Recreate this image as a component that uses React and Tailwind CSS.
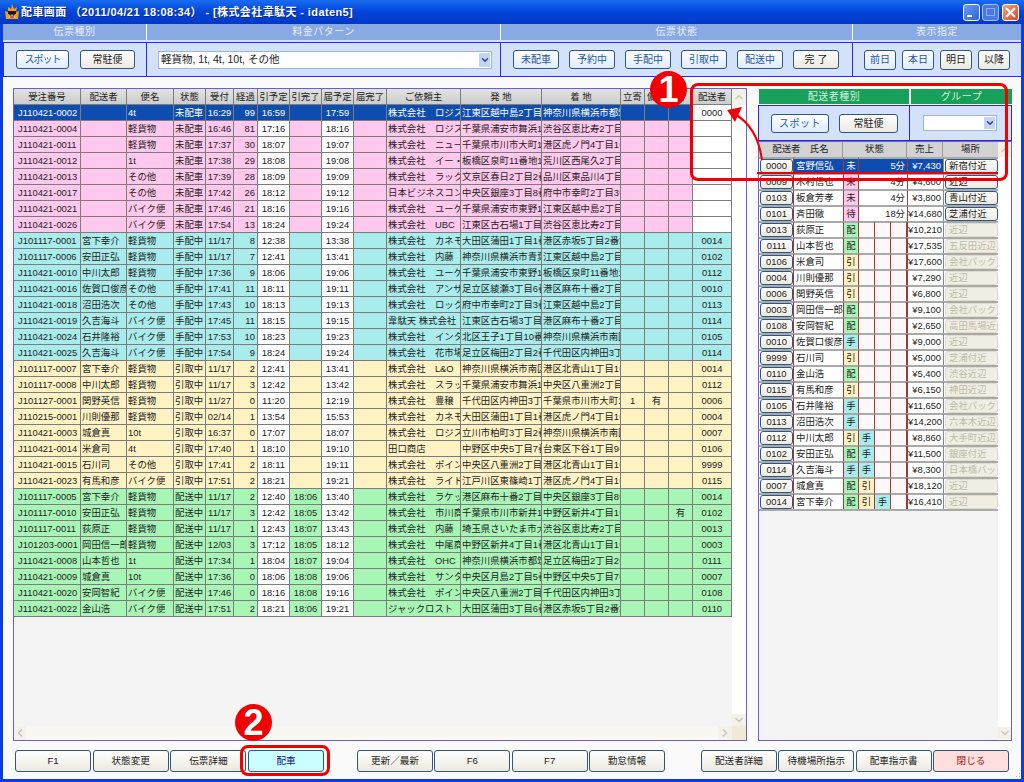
import { ChevronDown, ChevronUp, ChevronLeft, ChevronRight } from 'lucide-react'

const TABLE_COLS = 'grid grid-cols-[67px_46px_47px_32px_28px_24px_32px_32px_32px_33px_74px_81px_79px_24px_24px_24px_39px]'
const HEADERS = ['受注番号', '配送者', '便名', '状態', '受付', '経過', '引予定', '引完了', '届予定', '届完了', 'ご依頼主', '発 地', '着 地', '立寄', '備考', '告', '配送者']

const COLORS = {
  pink: 'bg-[#ffc8ec]',
  teal: 'bg-[#a8ecec]',
  yellow: 'bg-[#fff3c4]',
  green: 'bg-[#a8f6b6]',
}

// no, driver, bin, status, recv, elapsed, pickup plan, pickup done, drop plan, drop done, client, from, to, stop, note, flag, code
const ORDERS = [
  ['pink', 'J110421-0002', '', '4t', '未配車', '16:29', '99', '16:59', '', '17:59', '', '株式会社　ロジスティクス', '江東区越中島2丁目1', '神奈川県横浜市都筑区', '', '', '', '0000'],
  ['pink', 'J110421-0004', '', '軽貨物', '未配車', '16:46', '81', '17:16', '', '18:16', '', '株式会社　ロジスティクス', '千葉県浦安市舞浜1', '渋谷区恵比寿2丁目1', '', '', '', ''],
  ['pink', 'J110421-0011', '', '軽貨物', '未配車', '17:37', '30', '18:07', '', '19:07', '', '株式会社　ニューワン', '千葉県市川市大町1', '港区虎ノ門4丁目1番', '', '', '', ''],
  ['pink', 'J110421-0012', '', '1t', '未配車', '17:38', '29', '18:08', '', '19:08', '', '株式会社　イー・フラット', '板橋区泉町11番地1', '荒川区西尾久2丁目1', '', '', '', ''],
  ['pink', 'J110421-0013', '', 'その他', '未配車', '17:39', '28', '18:09', '', '19:09', '', '株式会社　ラックス', '文京区春日2丁目2番', '品川区東品川4丁目1', '', '', '', ''],
  ['pink', 'J110421-0017', '', 'その他', '未配車', '17:42', '26', '18:12', '', '19:12', '', '日本ビジネスコンサル', '中央区銀座3丁目8番', '府中市幸町2丁目3番', '', '', '', ''],
  ['pink', 'J110421-0021', '', 'バイク便', '未配車', '17:46', '21', '18:16', '', '19:16', '', '株式会社　ユーケー', '千葉県浦安市東野1', '江東区越中島2丁目1', '', '', '', ''],
  ['pink', 'J110421-0026', '', 'バイク便', '未配車', '17:54', '13', '18:24', '', '19:24', '', '株式会社　UBC', '江東区古石場1丁目1', '渋谷区恵比寿2丁目1', '', '', '', ''],
  ['teal', 'J101117-0001', '宮下幸介', '軽貨物', '手配中', '11/17', '8', '12:38', '', '13:38', '', '株式会社　カネモト', '大田区蒲田1丁目1番', '港区赤坂5丁目2番地', '', '', '', '0014'],
  ['teal', 'J101117-0006', '安田正弘', '軽貨物', '手配中', '11/17', '7', '12:41', '', '13:41', '', '株式会社　内藤', '神奈川県横浜市青葉', '江東区越中島2丁目1', '', '', '', '0102'],
  ['teal', 'J110421-0010', '中川太郎', '軽貨物', '手配中', '17:36', '9', '18:06', '', '19:06', '', '株式会社　ユーケー', '千葉県浦安市東野1', '板橋区泉町11番地1', '', '', '', '0112'],
  ['teal', 'J110421-0016', '佐賀口俊彦', 'その他', '手配中', '17:41', '11', '18:11', '', '19:11', '', '株式会社　アンザイ', '足立区綾瀬3丁目6番', '港区麻布十番2丁目1', '', '', '', '0010'],
  ['teal', 'J110421-0018', '沼田浩次', 'その他', '手配中', '17:43', '10', '18:13', '', '19:13', '', '株式会社　ロックス', '府中市幸町2丁目3番', '江東区越中島2丁目1', '', '', '', '0113'],
  ['teal', 'J110421-0019', '久吉海斗', 'バイク便', '手配中', '17:45', '11', '18:15', '', '19:15', '', '韋駄天 株式会社', '江東区古石場3丁目1', '港区麻布十番2丁目1', '', '', '', '0114'],
  ['teal', 'J110421-0024', '石井隆裕', 'バイク便', '手配中', '17:53', '10', '18:23', '', '19:23', '', '株式会社　インターナ', '北区王子1丁目10番', '神奈川県横浜市南区', '', '', '', '0105'],
  ['teal', 'J110421-0025', '久吉海斗', 'バイク便', '手配中', '17:54', '9', '18:24', '', '19:24', '', '株式会社　花市場', '足立区梅田2丁目2番', '千代田区内神田3丁目', '', '', '', '0114'],
  ['yellow', 'J101117-0007', '宮下幸介', '軽貨物', '引取中', '11/17', '2', '12:41', '', '13:41', '', '株式会社　L&O', '神奈川県横浜市南区', '港区北青山1丁目1番', '', '', '', '0014'],
  ['yellow', 'J101117-0008', '中川太郎', '軽貨物', '引取中', '11/17', '3', '12:42', '', '13:42', '', '株式会社　スラッシュ', '千葉県浦安市舞浜1', '中央区八重洲2丁目1', '', '', '', '0112'],
  ['yellow', 'J101127-0001', '関野英信', '軽貨物', '引取中', '11/27', '0', '11:20', '', '12:19', '', '株式会社　豊穣', '千代田区内神田3丁目', '千葉県市川市大町1', '1', '有', '', '0006'],
  ['yellow', 'J110215-0001', '川則優那', '軽貨物', '引取中', '02/14', '1', '13:54', '', '15:53', '', '株式会社　カネモト', '大田区蒲田1丁目1番', '港区虎ノ門4丁目1番', '', '', '', '0004'],
  ['yellow', 'J110421-0003', '城倉真', '10t', '引取中', '16:37', '0', '17:07', '', '18:07', '', '株式会社　ロジスティクス', '立川市柏町3丁目2番', '神奈川県横浜市南区', '', '', '', '0007'],
  ['yellow', 'J110421-0014', '米倉司', '4t', '引取中', '17:40', '1', '18:10', '', '19:10', '', '田口商店', '中野区中央5丁目7番', '台東区下谷1丁目9番', '', '', '', '0106'],
  ['yellow', 'J110421-0015', '石川司', 'その他', '引取中', '17:41', '2', '18:11', '', '19:11', '', '株式会社　ポイント', '中央区八重洲2丁目1', '港区北青山1丁目1番', '', '', '', '9999'],
  ['yellow', 'J110421-0023', '有馬和彦', 'バイク便', '引取中', '17:51', '2', '18:21', '', '19:21', '', '株式会社　ライドオン', '江戸川区東篠崎1丁目', '港区虎ノ門4丁目1番', '', '', '', '0115'],
  ['green', 'J101117-0005', '宮下幸介', '軽貨物', '配送中', '11/17', '2', '12:40', '18:06', '13:40', '', '株式会社　ラケット', '港区麻布十番2丁目1', '中央区銀座3丁目8番', '', '', '', '0014'],
  ['green', 'J101117-0010', '安田正弘', '軽貨物', '配送中', '11/17', '3', '12:42', '18:05', '13:42', '', '株式会社　市川商事', '千葉県市川市新井1', '中野区新井4丁目1番', '', '', '有', '0102'],
  ['green', 'J101117-0011', '荻原正', '軽貨物', '配送中', '11/17', '1', '12:43', '18:07', '13:43', '', '株式会社　内藤', '埼玉県さいたま市大宮', '渋谷区恵比寿2丁目1', '', '', '', '0013'],
  ['green', 'J101203-0001', '岡田信一郎', '軽貨物', '配送中', '12/03', '3', '17:12', '18:05', '18:12', '', '株式会社　中尾商事', '中野区新井4丁目1番', '港区北青山1丁目1番', '', '', '', '0003'],
  ['green', 'J110421-0008', '山本哲也', '1t', '配送中', '17:34', '1', '18:04', '18:07', '19:04', '', '株式会社　OHC', '神奈川県横浜市都筑', '足立区梅田2丁目2番', '', '', '', '0111'],
  ['green', 'J110421-0009', '城倉真', '10t', '配送中', '17:36', '0', '18:06', '18:08', '19:06', '', '株式会社　サンタス', '中央区月島2丁目5番', '中野区中央5丁目7番', '', '', '', '0007'],
  ['green', 'J110421-0020', '安岡智紀', 'バイク便', '配送中', '17:46', '0', '18:16', '18:08', '19:16', '', '株式会社　ポイント', '中央区八重洲2丁目1', '千代田区内神田3丁目', '', '', '', '0108'],
  ['green', 'J110421-0022', '金山浩', 'バイク便', '配送中', '17:51', '2', '18:21', '18:06', '19:21', '', 'ジャックロスト', '大田区蒲田3丁目6番', '港区赤坂5丁目2番地', '', '', '', '0110'],
]

const DRIVER_COLS = 'grid grid-cols-[35px_49px_16px_16px_16px_16px_36px_55px]'
const STATE_BG = {
  未: 'bg-[#ffc8ec]',
  待: 'bg-[#ffc8ec]',
  配: 'bg-[#a8f6b6]',
  引: 'bg-[#fff3c4]',
  手: 'bg-[#a8ecec]',
}

// code, name, states, waiting minutes, sales, place, active place button
const DRIVERS = [
  ['0000', '宮野信弘', ['未'], '5分', '¥7,430', '新宿付近', true],
  ['0009', '木村信也', ['未'], '4分', '¥4,600', '近辺', true],
  ['0103', '板倉芳孝', ['未'], '4分', '¥3,800', '青山付近', true],
  ['0101', '斉田徹', ['待'], '18分', '¥14,680', '芝浦付近', true],
  ['0013', '荻原正', ['配'], null, '¥10,210', '近辺'],
  ['0111', '山本哲也', ['配'], null, '¥17,535', '五反田近辺'],
  ['0106', '米倉司', ['引'], null, '¥17,600', '会社バック'],
  ['0004', '川則優那', ['引'], null, '¥7,290', '近辺'],
  ['0006', '関野英信', ['引'], null, '¥6,800', '近辺'],
  ['0003', '岡田信一郎', ['配'], null, '¥9,100', '会社バック'],
  ['0108', '安岡智紀', ['配'], null, '¥2,650', '高田馬場近辺'],
  ['0010', '佐賀口俊彦', ['手'], null, '¥9,000', '近辺'],
  ['9999', '石川司', ['引'], null, '¥5,000', '芝浦付近'],
  ['0110', '金山浩', ['配'], null, '¥5,400', '渋谷近辺'],
  ['0115', '有馬和彦', ['引'], null, '¥6,150', '神田近辺'],
  ['0105', '石井隆裕', ['手'], null, '¥11,650', '会社バック'],
  ['0113', '沼田浩次', ['手'], null, '¥14,200', '六本木近辺'],
  ['0112', '中川太郎', ['引', '手'], null, '¥8,860', '大手町近辺'],
  ['0102', '安田正弘', ['配', '手'], null, '¥11,500', '銀座付近'],
  ['0114', '久吉海斗', ['手', '手'], null, '¥8,300', '日本橋バック'],
  ['0007', '城倉真', ['配', '引'], null, '¥18,120', '近辺'],
  ['0014', '宮下幸介', ['配', '引', '手'], null, '¥16,410', '近辺'],
]

/* ---------- XP style button ---------- */
function Btn({ children, kind = 'plain', className = '' }) {
  const look = {
    plain: 'bg-gradient-to-b from-white to-[#ece9df] text-[#222]',
    on: 'bg-gradient-to-b from-white to-[#dfecfc] text-[#2458a8]',
    hot: 'bg-[#ccffff] text-[#10108a]',
    close: 'bg-[#ffdede] text-[#a01010]',
  }[kind]
  return (
    <div className={`flex items-center justify-center rounded-[3px] border border-[#2d5680] whitespace-nowrap shrink-0 ${look} ${className}`}>
      {children}
    </div>
  )
}

function Select({ value, className = '' }) {
  return (
    <div className={`flex items-center bg-white border border-[#9db4d2] ${className}`}>
      <span className="flex-1 pl-[2px] text-[10.5px] text-[#222] whitespace-nowrap">{value}</span>
      <span className="w-[13px] h-full flex items-center justify-center bg-[#c3d5f5] border border-white">
        <ChevronDown className="w-[10px] h-[10px] text-[#2b4a86]" strokeWidth={3.5} />
      </span>
    </div>
  )
}

function ScrollArrow({ icon: Icon, className = '' }) {
  return (
    <div className={`flex items-center justify-center bg-[#f3f1e8] ${className}`}>
      <Icon className="w-[12px] h-[12px] text-[#c9c7bb]" strokeWidth={3} />
    </div>
  )
}

function OrderCell({ value, index, tint, selected }) {
  const white = !selected && (index === 6 || index === 8 || (index === 16 && tint === 'pink'))
  const center = index === 4 || (index >= 6 && index <= 9) || index >= 13
  const align = index === 5 ? 'text-right pr-[2px]' : center ? 'text-center' : index === 0 ? 'pl-[4px]' : 'pl-[1px]'
  let bg = selected ? 'bg-[#0f4cb0] text-white' : `${COLORS[tint]} text-[#222]`
  if (white || (selected && index === 16)) bg = 'bg-white text-[#222]'
  return (
    <div className={`h-4 leading-[15px] border-r border-b border-[#7c7c7c] overflow-hidden whitespace-nowrap ${align} ${bg}`}>
      {value}
    </div>
  )
}

function OrderTable() {
  return (
    <div className="w-[734px] h-[653px] border border-[#6a5fd0] bg-[#f4f4f4] flex flex-col">
      <div className="flex-1 flex min-h-0">
        <div className="w-[718px]">
          <div className={TABLE_COLS}>
            {HEADERS.map((h, i) => (
              <div key={i} className="h-4 leading-[15px] text-center text-[#222] bg-gradient-to-b from-[#e2e2e2] to-[#cdcdcd] border-r border-b border-[#7c7c7c] overflow-hidden whitespace-nowrap">
                {h}
              </div>
            ))}
            {ORDERS.map(([tint, ...cells], r) =>
              cells.map((v, i) => (
                <OrderCell key={`${r}-${i}`} value={v} index={i} tint={tint} selected={r === 0} />
              ))
            )}
          </div>
        </div>
        <div className="w-[14px] bg-white flex flex-col justify-between">
          <ScrollArrow icon={ChevronUp} className="h-4" />
          <ScrollArrow icon={ChevronDown} className="h-[12px]" />
        </div>
      </div>
      <div className="h-[14px] flex bg-[#f8f7f2]">
        <ScrollArrow icon={ChevronLeft} className="w-[12px]" />
        <div className="flex-1" />
        <ScrollArrow icon={ChevronRight} className="w-[14px]" />
        <div className="w-[14px] bg-[#efe9d6]" />
      </div>
    </div>
  )
}

function DriverRow({ row, selected }) {
  const [code, name, states, wait, sales, place, active] = row
  const line = 'border-t-2 border-t-[#a9a9a9]'
  const body = selected ? 'bg-[#0f4cb0] text-white' : 'bg-white text-[#222]'
  return (
    <div className={`${DRIVER_COLS} h-4`}>
      <div className={`${line} border-r border-r-[#a03a3a] flex pl-[1px] bg-white`}>
        <Btn className="w-[33px] h-[14px]">{code}</Btn>
      </div>
      <div className={`${line} pl-[2px] leading-[13px] overflow-hidden whitespace-nowrap ${body}`}>{name}</div>
      <div className={`${line} border-l border-r border-l-[#a03a3a] border-r-[#a03a3a] text-center leading-[13px] ${selected ? body : STATE_BG[states[0]]}`}>
        {states[0]}
      </div>
      {wait ? (
        <div className={`col-span-3 ${line} text-right pr-[2px] leading-[13px] ${body}`}>{wait}</div>
      ) : (
        [1, 2, 3].map(i => (
          <div key={i} className={`${line} border-r border-r-[#a03a3a] text-center leading-[13px] text-[#222] ${STATE_BG[states[i]] || 'bg-[#fff8f8]'}`}>
            {states[i]}
          </div>
        ))
      )}
      <div className={`${line} border-l border-l-[#a03a3a] text-right pr-[2px] leading-[13px] whitespace-nowrap overflow-hidden ${body}`}>{sales}</div>
      <div className={`${line} border-l border-l-[#8a8a8a] flex pl-[1px] bg-white`}>
        {active ? (
          <Btn className="w-[53px] h-[14px] justify-start pl-[3px]">{place}</Btn>
        ) : (
          <div className="w-[53px] h-[14px] rounded-[3px] bg-[#f0eee3] border border-[#e0dccb] text-[#bdbaa8] leading-[12px] pl-[3px] overflow-hidden whitespace-nowrap">
            {place}
          </div>
        )}
      </div>
    </div>
  )
}

function DriverPanel() {
  return (
    <div className="w-[254px] mt-[1px] flex flex-col text-[#222]">
      <div className="ml-[1px] flex gap-[2px] h-[15px] text-[10px] text-[#d6f2df] text-center leading-[15px] tracking-[0.5px]">
        <div className="w-[150px] bg-[#17a05a]">配送者種別</div>
        <div className="w-[101px] bg-[#17a05a]">グループ</div>
      </div>
      <div className="h-[36px] mt-[1px] flex bg-[#d3e2f8] border border-[#2a2ae0]">
        <div className="w-[151px] flex items-center gap-[10px] pl-[12px] border-r border-[#2a2ae0]">
          <Btn kind="on" className="w-[58px] h-[19px] text-[10px] tracking-[0.5px]">スポット</Btn>
          <Btn className="w-[59px] h-[19px] text-[10px]">常駐便</Btn>
        </div>
        <div className="flex-1 flex items-center pl-[13px]">
          <Select value="" className="w-[74px] h-[16px]" />
        </div>
      </div>
      <div className="h-[600px] border border-[#6a5fd0] bg-[#f4f4f4] flex">
        <div className="w-[239px]">
          <div className={`${DRIVER_COLS} h-[15px] leading-[14px] text-center`}>
            <div className="col-span-2 bg-[#d2d2d2] border-r border-[#9a9a9a]">配送者　氏名</div>
            <div className="col-span-4 bg-[#d2d2d2] border-r border-[#9a9a9a]">状態</div>
            <div className="bg-[#d2d2d2] border-r border-[#9a9a9a]">売上</div>
            <div className="bg-[#d2d2d2]">場所</div>
          </div>
          {DRIVERS.map((d, i) => (
            <DriverRow key={d[0]} row={d} selected={i === 0} />
          ))}
          <div className="h-[2px] bg-[#a9a9a9]" />
        </div>
        <div className="w-[13px] bg-white flex flex-col justify-between">
          <ScrollArrow icon={ChevronUp} className="h-[15px]" />
          <ScrollArrow icon={ChevronDown} className="h-[12px] mb-[1px]" />
        </div>
      </div>
    </div>
  )
}

function WindowButtons() {
  return (
    <div className="flex gap-[2px]">
      <div className="w-[17px] h-[17px] rounded-[3px] border border-white bg-gradient-to-br from-[#6d9bf2] to-[#2f5fd8] flex items-end pl-[3px] pb-[3px]">
        <div className="w-[5px] h-[2px] bg-white" />
      </div>
      <div className="w-[17px] h-[17px] rounded-[3px] border border-[#a8bff0] bg-[#4a78e4] flex items-center justify-center">
        <div className="w-[9px] h-[8px] border border-[#8fb0ee]" />
      </div>
      <div className="ml-[1px] w-[17px] h-[17px] rounded-[3px] border border-white bg-gradient-to-br from-[#f0a080] to-[#d8401c] flex items-center justify-center">
        <svg width="11" height="11" viewBox="0 0 13 13">
          <path d="M2 2 L11 11 M11 2 L2 11" stroke="white" strokeWidth="2.6" strokeLinecap="round" />
        </svg>
      </div>
    </div>
  )
}

function AppIcon() {
  return (
    <svg width="14" height="16" viewBox="0 0 14 16" className="shrink-0">
      <path d="M1 15 L0 7 L3 8 L3 3 L6 5 L7 0 L9 5 L12 3 L11 8 L14 7 L13 15 Z" fill="#f59a14" />
      <path d="M4 9 H10 V14 H4 Z" fill="#ffe08a" />
      <path d="M3 7 H11 V10 H3 Z" fill="#1a1a1a" />
      <circle cx="5.5" cy="10.5" r="1.2" fill="#1a1a1a" />
      <circle cx="8.5" cy="10.5" r="1.2" fill="#1a1a1a" />
      <path d="M5 13 H9" stroke="#c81e1e" strokeWidth="1.4" />
    </svg>
  )
}

function Annotations() {
  return (
    <>
      <div className="absolute left-[690px] top-[83px] w-[318px] h-[98px] rounded-[8px] border-[3px] border-[#f00000]" />
      <div className="absolute left-[240px] top-[745px] w-[90px] h-[31px] rounded-[8px] border-[3px] border-[#f00000]" />
      <div className="absolute left-[757px] top-[172px] w-[241px] h-[2px] bg-[#f00000]" />
      <svg className="absolute left-0 top-0 pointer-events-none" width="1024" height="782" viewBox="0 0 1024 782">
        <path d="M762 160 C759 138 750 122 733 113" fill="none" stroke="#f00000" strokeWidth="2" />
        <path d="M727 110 L742 107 L735 122 Z" fill="#f00000" />
        <path d="M1019 773 h1 v1 h-1 z M1016 776 h1 v1 h-1 z M1019 776 h1 v1 h-1 z" fill="#b8b4a4" />
      </svg>
      <div className="absolute left-[650px] top-[71px] w-[37px] h-[37px] rounded-full bg-[#f00000] text-white flex items-center justify-center text-[36px] font-bold leading-none">1</div>
      <div className="absolute left-[235px] top-[704px] w-[37px] h-[37px] rounded-full bg-[#f00000] text-white flex items-center justify-center text-[36px] font-bold leading-none">2</div>
    </>
  )
}

export default function App() {
  return (
    <div className="relative w-[1024px] h-[782px] overflow-hidden bg-[#0a3ee0] font-['Liberation_Sans','Noto_Sans_CJK_JP',sans-serif] text-[9.4px] text-[#222]">
      {/* title bar */}
      <div className="h-6 flex items-center pl-[5px] pr-[5px] bg-gradient-to-b from-[#1a6cf0] via-[#0344d8] to-[#0238c8] text-white text-[11px] font-bold">
        <AppIcon />
        <span className="ml-[2px] flex-1 whitespace-nowrap tracking-[0.4px] [text-shadow:1px_1px_0_#0a2a80]">
          配車画面 （2011/04/21 18:08:34） - [株式会社韋駄天 - idaten5]
        </span>
        <WindowButtons />
      </div>

      <div className="mx-[3px] h-[755px] bg-[#fafafa] flex flex-col">
        {/* label strip */}
        <div className="h-4 flex text-[10px] text-center leading-[16px] text-[#e8f0ff] bg-[#89a9e2] tracking-[0.5px]">
          <div className="w-[144px] border-r border-white">伝票種別</div>
          <div className="w-[354px] border-r border-white">料金パターン</div>
          <div className="w-[352px] border-r border-white">伝票状態</div>
          <div className="flex-1">表示指定</div>
        </div>
        <div className="h-[2px] bg-[#d3e2f8]" />

        {/* controls strip */}
        <div className="h-[35px] flex bg-[#d3e2f8] border-y border-[#2a2ae0] text-[10px]">
          <div className="w-[144px] flex items-center gap-[11px] pl-[12px] border-x border-[#2a2ae0]">
            <Btn kind="on" className="w-[53px] h-[19px] tracking-[-1px]">スポット</Btn>
            <Btn className="w-[55px] h-[19px]">常駐便</Btn>
          </div>
          <div className="w-[354px] flex items-center pl-[11px] border-r border-[#2a2ae0]">
            <Select value="軽貨物, 1t, 4t, 10t, その他" className="w-[334px] h-[18px]" />
          </div>
          <div className="w-[352px] flex items-center gap-[10px] pl-[12px] border-r border-[#2a2ae0]">
            <Btn kind="on" className="w-[46px] h-[19px]">未配車</Btn>
            <Btn kind="on" className="w-[46px] h-[19px]">予約中</Btn>
            <Btn kind="on" className="w-[46px] h-[19px]">手配中</Btn>
            <Btn kind="on" className="w-[46px] h-[19px]">引取中</Btn>
            <Btn kind="on" className="w-[46px] h-[19px]">配送中</Btn>
            <Btn className="w-[46px] h-[19px]">完 了</Btn>
          </div>
          <div className="flex-1 flex items-center gap-[6px] pl-[11px]">
            <Btn kind="on" className="w-[32px] h-[20px]">前日</Btn>
            <Btn kind="on" className="w-[32px] h-[20px]">本日</Btn>
            <Btn className="w-[32px] h-[20px]">明日</Btn>
            <Btn className="w-[32px] h-[20px]">以降</Btn>
          </div>
        </div>

        {/* main area */}
        <div className="mt-[11px] flex gap-[11px] pl-[10px]">
          <OrderTable />
          <DriverPanel />
        </div>

        {/* bottom buttons */}
        <div className="mt-[9px] flex pl-[12px] text-[9.6px]">
          <div className="flex gap-[1.67px]">
            <Btn className="w-[76px] h-[22px]">F1</Btn>
            <Btn className="w-[76px] h-[22px]">状態変更</Btn>
            <Btn className="w-[76px] h-[22px]">伝票詳細</Btn>
            <Btn kind="hot" className="w-[76px] h-[22px]">配車</Btn>
          </div>
          <div className="flex gap-[1.33px] ml-[33px]">
            <Btn className="w-[76px] h-[22px]">更新／最新</Btn>
            <Btn className="w-[76px] h-[22px]">F6</Btn>
            <Btn className="w-[76px] h-[22px]">F7</Btn>
            <Btn className="w-[76px] h-[22px]">勤怠情報</Btn>
          </div>
          <div className="flex gap-[1.33px] ml-[36px]">
            <Btn className="w-[76px] h-[22px]">配送者詳細</Btn>
            <Btn className="w-[76px] h-[22px]">待機場所指示</Btn>
            <Btn className="w-[76px] h-[22px]">配車指示書</Btn>
            <Btn kind="close" className="w-[76px] h-[22px]">閉じる</Btn>
          </div>
        </div>
      </div>

      <Annotations />
    </div>
  )
}
